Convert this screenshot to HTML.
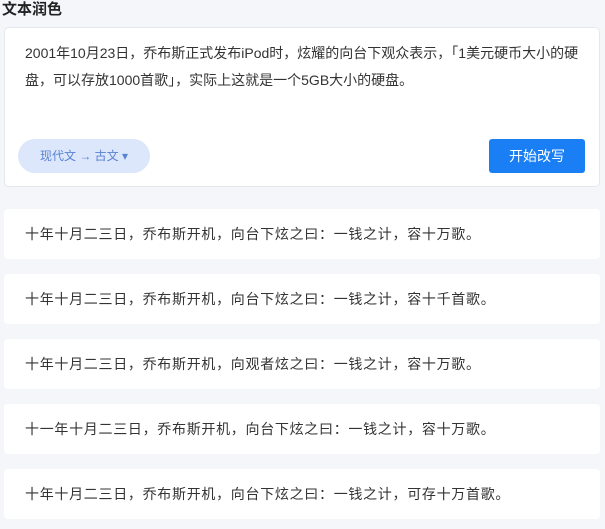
<!DOCTYPE html>
<html><head><meta charset="utf-8"><style>
body{margin:0;width:605px;height:529px;background:#f4f6f9;font-family:"Liberation Sans","Noto Sans CJK SC",sans-serif;color:#333;position:relative;overflow:hidden}
.t{position:absolute;left:2px;top:0;font-size:15px;font-weight:bold;color:#222;line-height:20px}
.main{position:absolute;left:4px;top:27px;width:594px;height:158px;background:#fff;border:1px solid #e4e8ee;border-radius:5px}
.txt{position:absolute;left:20px;top:12px;width:558px;font-size:14px;line-height:27px;color:#333}
.pill{position:absolute;left:13px;top:111px;width:132px;height:34px;border-radius:17px;background:#dce7fc;color:#5a82d2;font-size:12px;line-height:34px;text-align:center}
.btn{position:absolute;left:484px;top:111px;width:96px;height:34px;border-radius:3px;background:#1a7ff5;color:#fff;font-size:14px;line-height:34px;text-align:center}
.r{position:absolute;left:4px;width:596px;height:50px;background:#fff;border-radius:4px;font-size:14px;line-height:50px;color:#333;padding-left:21px;box-sizing:border-box;letter-spacing:0.7px}
</style></head><body>
<div class="t">文本润色</div>
<div class="main">
<div class="txt">2001年10月23日，乔布斯正式发布iPod时，炫耀的向台下观众表示，「1美元硬币大小的硬<br>盘，可以存放1000首歌」，实际上这就是一个5GB大小的硬盘。</div>
<div class="pill">现代文 → 古文 ▾</div>
<div class="btn">开始改写</div>
</div>
<div class="r" style="top:209px">十年十月二三日，乔布斯开机，向台下炫之曰：一钱之计，容十万歌。</div>
<div class="r" style="top:274px">十年十月二三日，乔布斯开机，向台下炫之曰：一钱之计，容十千首歌。</div>
<div class="r" style="top:339px">十年十月二三日，乔布斯开机，向观者炫之曰：一钱之计，容十万歌。</div>
<div class="r" style="top:404px">十一年十月二三日，乔布斯开机，向台下炫之曰：一钱之计，容十万歌。</div>
<div class="r" style="top:469px">十年十月二三日，乔布斯开机，向台下炫之曰：一钱之计，可存十万首歌。</div>
</body></html>
